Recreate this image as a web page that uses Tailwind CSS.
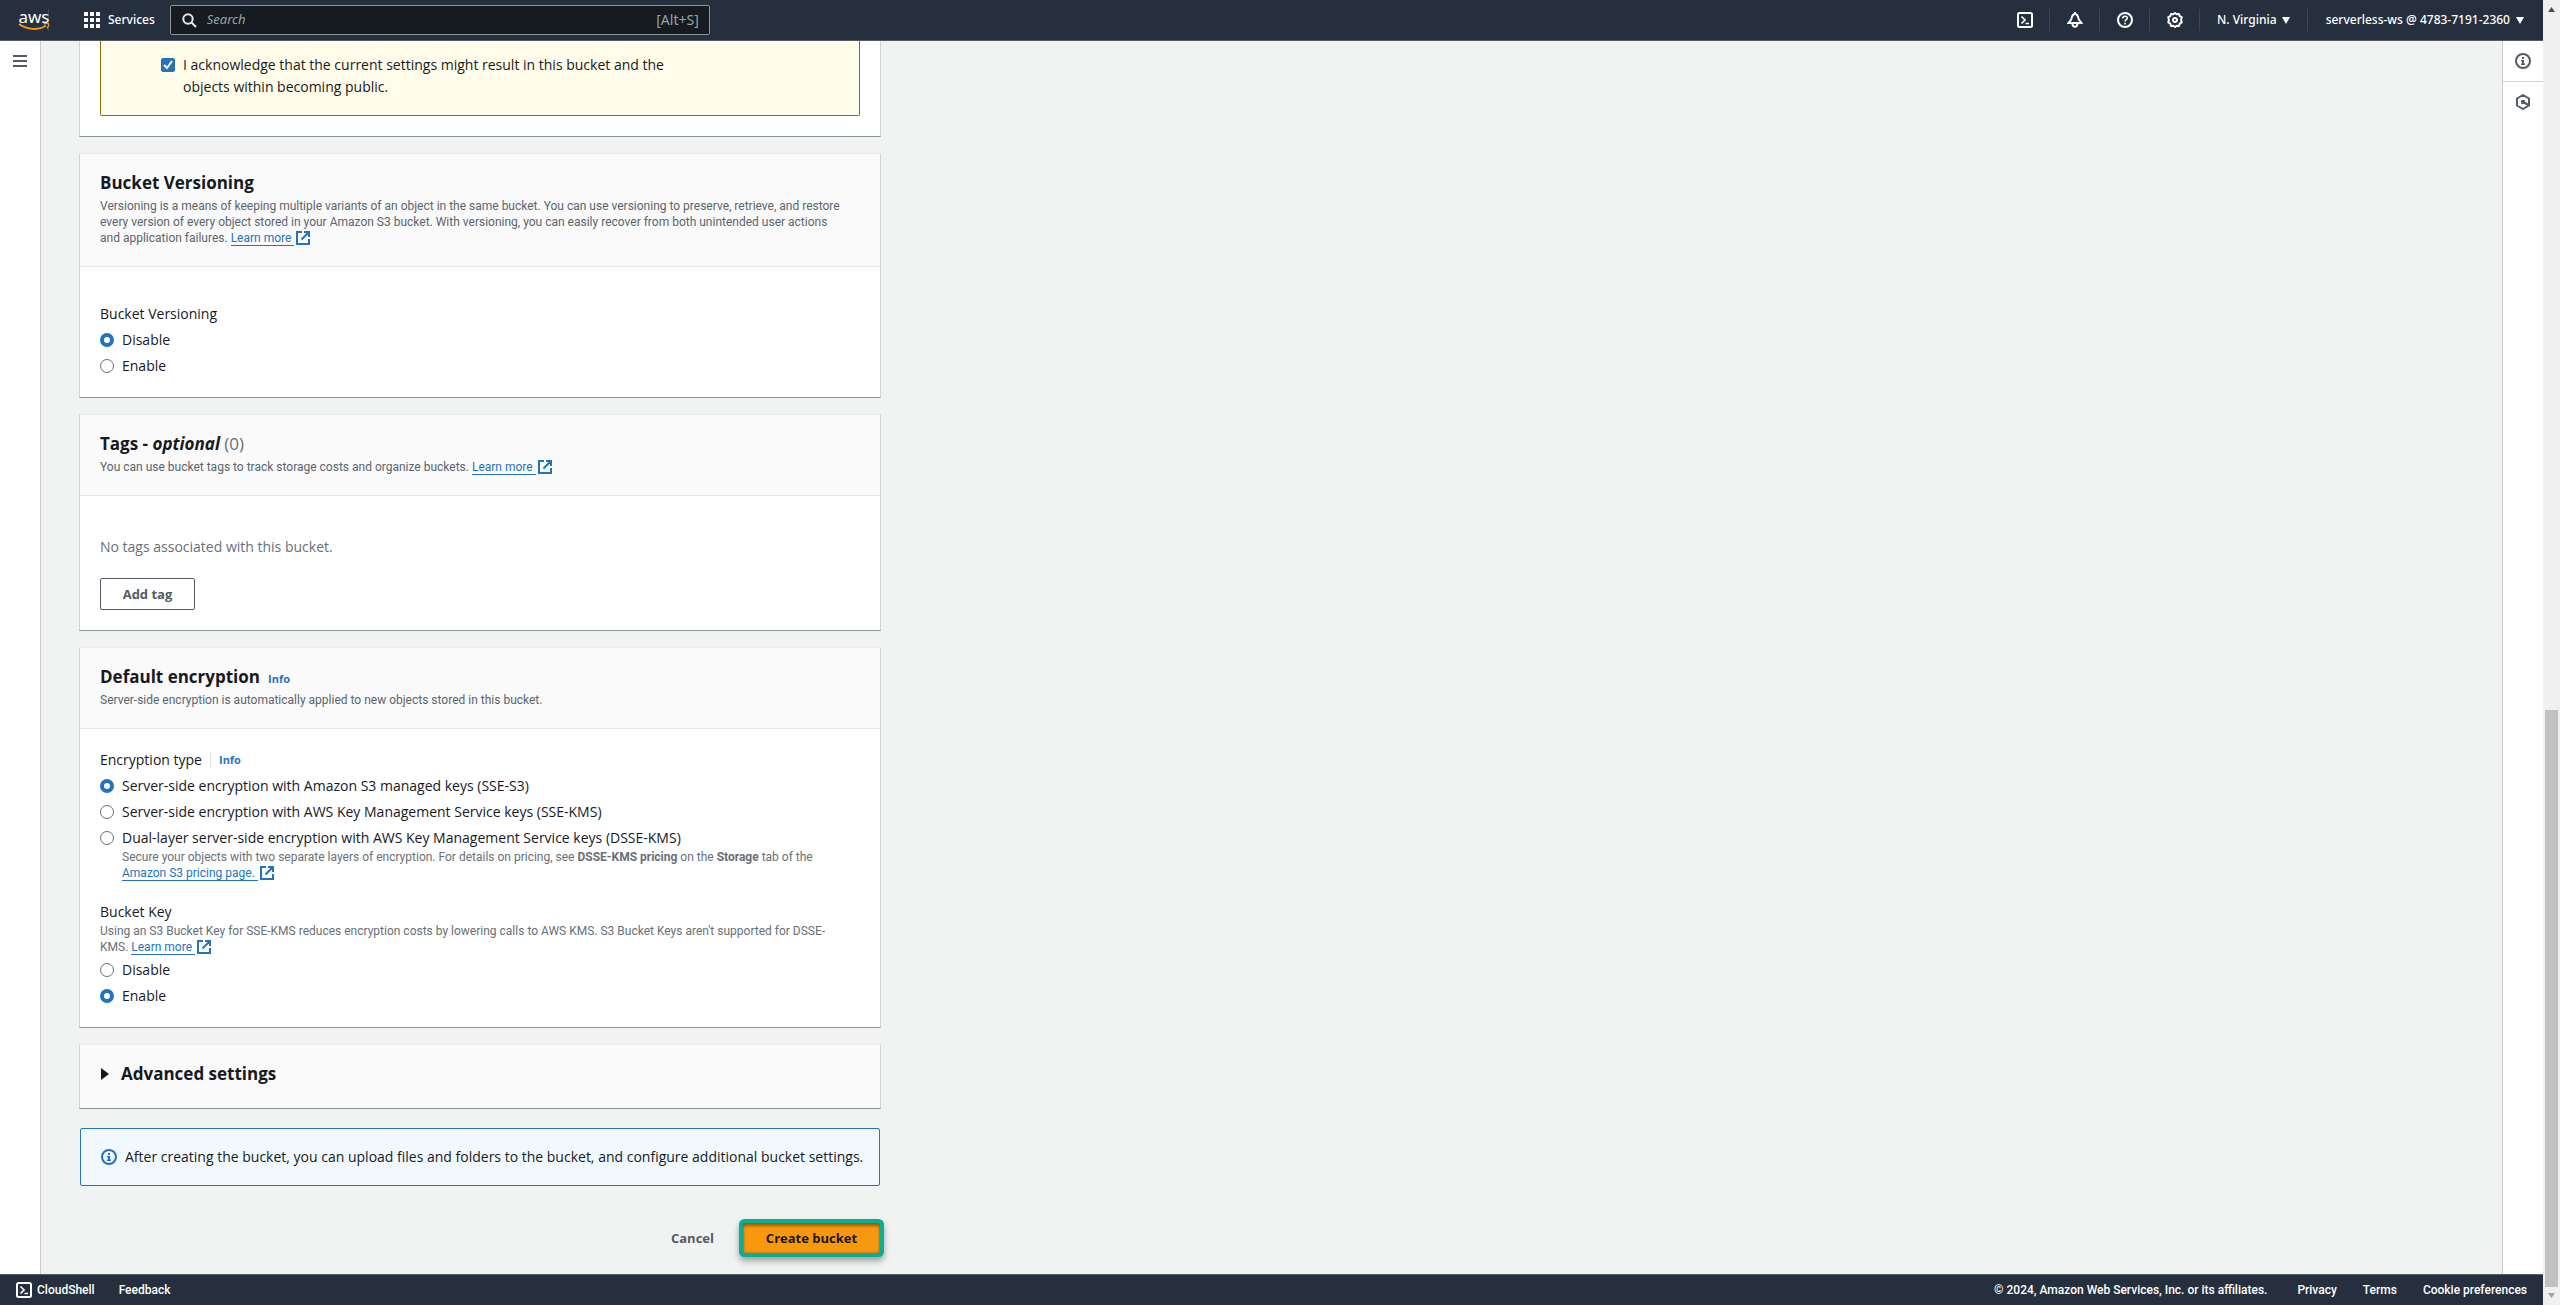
<!DOCTYPE html>
<html lang="en">
<head>
<meta charset="utf-8">
<title>Create bucket</title>
<script src="https://cdn.jsdelivr.net/npm/@tailwindcss/browser@4"></script>
</head>
<body class="flex h-screen bg-[#f1f3f3] font-['Open_Sans',sans-serif] text-sm leading-[22px] text-[#16191f]">

<svg class="hidden">
  <symbol id="external" viewBox="0 0 14 14"><path d="M6 1H1v12h12V8M8 1h5v5M13 1 5.500 8.500" fill="none" stroke="currentColor" stroke-width="2"/></symbol>
  <symbol id="shell" viewBox="0 0 16 16"><rect x="1" y="1" width="14" height="14" rx="1.500" fill="none" stroke="currentColor" stroke-width="2"/><path d="m4.500 4.500 3.500 3.500-3.500 3.500M8.500 11.500h3.500" fill="none" stroke="currentColor" stroke-width="1.700"/></symbol>
  <symbol id="info" viewBox="0 0 16 16"><circle cx="8" cy="8" r="7" fill="none" stroke="currentColor" stroke-width="2"/><path d="M7 4h2v2H7zM6 7h3v3.500h1V12H6v-1.500h1V8.500H6z" fill="currentColor"/></symbol>
  <symbol id="caret" viewBox="0 0 8 7"><path d="M0 0h8L4 7z" fill="currentColor"/></symbol>
</svg>

<div class="flex min-w-0 flex-1 flex-col">

  <header class="flex h-[41px] shrink-0 items-center border-b border-[#545b64] bg-[#252f3e] font-['Noto_Sans',sans-serif] text-xs font-medium text-white">
    <a href="#" aria-label="AWS" class="flex h-[22px] w-[49px] items-center border-r border-[#414750] pl-[18px]">
      <span class="flex flex-col items-center">
        <span class="text-[17px] leading-[12px] font-normal">aws</span>
        <svg class="h-[7px] w-8" viewBox="0 0 32 7"><path d="M1 1c8 6 20 6.500 27 1.500" fill="none" stroke="#f7981f" stroke-width="2"/><path d="M25.500 1c2.500-.8 4.500-.6 5 0s0 3-1.500 4.500" fill="none" stroke="#f7981f" stroke-width="1.300"/></svg>
      </span>
    </a>
    <button class="ml-[35px] flex items-center gap-2">
      <svg class="size-4" viewBox="0 0 16 16" fill="currentColor"><path d="M0 0h4v4H0zM6 0h4v4H6zM12 0h4v4h-4zM0 6h4v4H0zM6 6h4v4H6zM12 6h4v4h-4zM0 12h4v4H0zM6 12h4v4H6zM12 12h4v4h-4z"/></svg>
      Services
    </button>
    <label class="ml-[15px] flex h-[30px] w-[540px] items-center gap-[10px] rounded-[2px] border border-[#8d9899] bg-[#161a21] pr-[10px] pl-[11px]">
      <svg class="size-[15px] text-[#e5e7e8]" viewBox="0 0 15 15" fill="none" stroke="currentColor" stroke-width="2"><circle cx="6" cy="6" r="4.700"/><path d="m9.500 9.500 4.500 4.500"/></svg>
      <input type="text" aria-label="Search" placeholder="Search" class="min-w-0 flex-1 text-[13px] font-normal italic outline-none placeholder:text-[#95a5a6]">
      <span class="text-sm font-normal text-[#95a5a6]">[Alt+S]</span>
    </label>
    <div class="ml-auto flex items-center">
      <button aria-label="CloudShell" class="flex h-[22px] w-[50px] items-center justify-center border-r border-[#414750]"><svg class="size-4"><use href="#shell"/></svg></button>
      <button aria-label="Notifications" class="flex h-[22px] w-[50px] items-center justify-center border-r border-[#414750]"><svg class="size-4" viewBox="0 0 16 16" fill="none" stroke="currentColor" stroke-width="2"><path d="M8 0v2M8 2C5.500 2 5 4 4.500 6.500 4 8.500 2.500 9.500 1.500 11h13C13.500 9.500 12 8.500 11.500 6.500 11 4 10.500 2 8 2z"/><path d="M5.500 11.500a2.500 3.300 0 0 0 5 0"/></svg></button>
      <button aria-label="Help" class="flex h-[22px] w-[50px] items-center justify-center border-r border-[#414750]"><svg class="size-4" viewBox="0 0 16 16" fill="none" stroke="currentColor" stroke-width="2"><circle cx="8" cy="8" r="7"/><path d="M5.700 6.500C5.700 5 6.700 4.300 8 4.300s2.300.8 2.300 2C10.300 7.700 8 7.700 8 9.500M8 10.700v1.800" stroke-width="1.600"/></svg></button>
      <button aria-label="Settings" class="flex h-[22px] w-[50px] items-center justify-center border-r border-[#414750]"><svg class="size-4" viewBox="0 0 16 16" fill="none" stroke="currentColor" stroke-width="2"><path d="m8 1 1.800 1.300 2.200-.3.700 2.100 2 1-.6 2.900.6 2.500-2 1.200-.7 2.300-2.200-.3L8 15l-1.800-1.300-2.200.3-.7-2.300-2-1.200.6-2.500-.6-2.900 2-1L4 2l2.200.3z" stroke-linejoin="round"/><circle cx="8" cy="8" r="2"/></svg></button>
      <button class="flex h-[22px] items-center gap-[5px] border-r border-[#414750] px-[17px]">N. Virginia <svg class="h-[7px] w-2"><use href="#caret"/></svg></button>
      <button class="flex h-[22px] items-center gap-[6px] pr-[19px] pl-[18px]">serverless-ws @ 4783-7191-2360 <svg class="h-[7px] w-2"><use href="#caret"/></svg></button>
    </div>
  </header>

  <div class="flex min-h-0 flex-1">
    <nav class="w-[41px] shrink-0 border-r border-[#c9cdcd] bg-white">
      <button aria-label="Open navigation" class="flex h-10 w-full items-center justify-center"><svg class="h-3 w-[14px] text-[#545b64]" viewBox="0 0 14 12" fill="currentColor"><path d="M0 0h14v2H0zM0 5h14v2H0zM0 10h14v2H0z"/></svg></button>
    </nav>

    <main class="min-w-0 flex-1 overflow-hidden pl-[38px]">
      <form class="w-[802px]">

        <section class="border border-t-0 border-[#d0d4d4] border-b-[#879596] bg-white px-5 pb-5">
          <div class="rounded-b-[2px] border border-t-0 border-[#906806] bg-[#fffce9] pt-[13px] pb-[17px] pl-[60px]">
            <label class="flex w-[510px] gap-2">
              <span class="mt-1 grid size-[14px] shrink-0">
                <input type="checkbox" checked class="col-start-1 row-start-1 size-[14px] appearance-none rounded-[2px] border border-[#687078] checked:border-[#2573bd] checked:bg-[#2573bd]">
                <svg class="pointer-events-none col-start-1 row-start-1 size-[14px]" viewBox="0 0 14 14" fill="none" stroke="#fff" stroke-width="2"><path d="m3 7 3 3 5-7"/></svg>
              </span>
              <span>I acknowledge that the current settings might result in this bucket and the<br>objects within becoming public.</span>
            </label>
          </div>
        </section>

        <section class="mt-4 border border-[#d0d4d4] border-t-[#eaeded] border-b-[#879596] bg-white">
          <div class="border-b border-[#e3e7e7] bg-[#fafafa] px-5 pt-[18px] pb-5">
            <h2 class="mb-1 text-[17px] font-bold">Bucket Versioning</h2>
            <p class="font-[Roboto,sans-serif] text-xs leading-4 text-[#5b646d]">Versioning is a means of keeping multiple variants of an object in the same bucket. You can use versioning to preserve, retrieve, and restore<br>every version of every object stored in your Amazon S3 bucket. With versioning, you can easily recover from both unintended user actions<br>and application failures. <a href="#" class="text-[#2573bd]"><span class="border-b border-[#2573bd] pr-[3px]">Learn more</span><svg class="ml-[2px] inline size-[14px] align-[-3px]"><use href="#external"/></svg></a></p>
          </div>
          <fieldset class="flex flex-col gap-1 px-5 pt-9 pb-5">
            <legend class="contents">Bucket Versioning</legend>
            <label class="flex items-center gap-2"><input type="radio" name="versioning" checked class="size-[14px] appearance-none rounded-full border border-[#687078] bg-white checked:border-4 checked:border-[#2573bd]">Disable</label>
            <label class="flex items-center gap-2"><input type="radio" name="versioning" class="size-[14px] appearance-none rounded-full border border-[#687078] bg-white checked:border-4 checked:border-[#2573bd]">Enable</label>
          </fieldset>
        </section>

        <section class="mt-4 border border-[#d0d4d4] border-t-[#eaeded] border-b-[#879596] bg-white">
          <div class="border-b border-[#e3e7e7] bg-[#fafafa] px-5 pt-[18px] pb-5">
            <h2 class="mb-1 text-[17px] font-bold">Tags - <i>optional</i> <span class="font-normal text-[#687078]">(0)</span></h2>
            <p class="font-[Roboto,sans-serif] text-xs leading-4 text-[#5b646d]">You can use bucket tags to track storage costs and organize buckets. <a href="#" class="text-[#2573bd]"><span class="border-b border-[#2573bd] pr-[3px]">Learn more</span><svg class="ml-[2px] inline size-[14px] align-[-3px]"><use href="#external"/></svg></a></p>
          </div>
          <div class="px-5 pt-10 pb-5">
            <p class="text-[#687078]">No tags associated with this bucket.</p>
            <button type="button" class="mt-5 block h-8 w-[95px] rounded-[2px] border border-[#545b64] bg-white text-[13px] font-bold text-[#545b64]">Add tag</button>
          </div>
        </section>

        <section class="mt-4 border border-[#d0d4d4] border-t-[#eaeded] border-b-[#879596] bg-white">
          <div class="border-b border-[#e3e7e7] bg-[#fafafa] px-5 pt-[18px] pb-5">
            <div class="mb-1 flex h-[22px] items-baseline gap-2">
              <h2 class="text-[17px] leading-[22px] font-bold">Default encryption</h2>
              <a href="#" class="text-[11px] leading-4 font-bold text-[#2573bd]">Info</a>
            </div>
            <p class="font-[Roboto,sans-serif] text-xs leading-4 text-[#5b646d]">Server-side encryption is automatically applied to new objects stored in this bucket.</p>
          </div>
          <div class="px-5 pt-5 pb-5">
            <fieldset class="flex flex-col gap-1">
              <legend class="contents"><span class="flex items-center">Encryption type<a href="#" class="ml-2 flex h-[18px] items-center border-l border-[#e3e7e7] pl-2 text-[11px] font-bold text-[#2573bd]">Info</a></span></legend>
              <label class="flex items-center gap-2"><input type="radio" name="encryption" checked class="size-[14px] appearance-none rounded-full border border-[#687078] bg-white checked:border-4 checked:border-[#2573bd]">Server-side encryption with Amazon S3 managed keys (SSE-S3)</label>
              <label class="flex items-center gap-2"><input type="radio" name="encryption" class="size-[14px] appearance-none rounded-full border border-[#687078] bg-white checked:border-4 checked:border-[#2573bd]">Server-side encryption with AWS Key Management Service keys (SSE-KMS)</label>
              <div>
                <label class="flex items-center gap-2"><input type="radio" name="encryption" class="size-[14px] appearance-none rounded-full border border-[#687078] bg-white checked:border-4 checked:border-[#2573bd]">Dual-layer server-side encryption with AWS Key Management Service keys (DSSE-KMS)</label>
                <p class="pl-[22px] font-[Roboto,sans-serif] text-xs leading-4 text-[#687078]">Secure your objects with two separate layers of encryption. For details on pricing, see <b>DSSE-KMS pricing</b> on the <b>Storage</b> tab of the<br><a href="#" class="text-[#2573bd]"><span class="border-b border-[#2573bd] pr-[3px]">Amazon S3 pricing page.</span><svg class="ml-[2px] inline size-[14px] align-[-3px]"><use href="#external"/></svg></a></p>
              </div>
            </fieldset>
            <fieldset class="mt-5 flex flex-col">
              <legend class="contents">Bucket Key</legend>
              <p class="font-[Roboto,sans-serif] text-xs leading-4 text-[#687078]">Using an S3 Bucket Key for SSE-KMS reduces encryption costs by lowering calls to AWS KMS. S3 Bucket Keys aren't supported for DSSE-<br>KMS. <a href="#" class="text-[#2573bd]"><span class="border-b border-[#2573bd] pr-[3px]">Learn more</span><svg class="ml-[2px] inline size-[14px] align-[-3px]"><use href="#external"/></svg></a></p>
              <label class="mt-1 flex items-center gap-2"><input type="radio" name="key" class="size-[14px] appearance-none rounded-full border border-[#687078] bg-white checked:border-4 checked:border-[#2573bd]">Disable</label>
              <label class="mt-1 flex items-center gap-2"><input type="radio" name="key" checked class="size-[14px] appearance-none rounded-full border border-[#687078] bg-white checked:border-4 checked:border-[#2573bd]">Enable</label>
            </fieldset>
          </div>
        </section>

        <section class="mt-4 border border-[#d0d4d4] border-t-[#eaeded] border-b-[#879596] bg-[#fafafa] px-5 pt-[18px] pb-[23px]">
          <h2><button type="button" aria-expanded="false" class="flex items-center gap-3 text-[17px] leading-[22px] font-bold"><svg class="h-3 w-[9px]" viewBox="0 0 9 12"><path d="M1 0v12l8-6z" fill="currentColor"/></svg>Advanced settings</button></h2>
        </section>

        <div class="mx-px mt-[19px] flex items-center gap-2 rounded-[2px] border border-[#2573bd] bg-[#f1f9ff] py-[17px] pl-5 whitespace-nowrap">
          <svg class="size-4 text-[#2573bd]"><use href="#info"/></svg>
          After creating the bucket, you can upload files and folders to the bucket, and configure additional bucket settings.
        </div>

        <div class="mt-[37px] flex items-center justify-end gap-[29px] pr-px text-[13px] font-bold">
          <button type="button" class="text-[#545b64]">Cancel</button>
          <button type="submit" class="h-[30px] w-[137px] rounded-[2px] bg-[#f8980f] shadow-[inset_0_3px_3px_rgba(110,60,0,0.6),inset_0_0_3px_rgba(110,60,0,0.5),0_0_0_4px_#0aae92,0_4px_6px_4px_rgba(0,0,0,0.35)]">Create bucket</button>
        </div>
      </form>
    </main>

    <aside class="flex w-[41px] shrink-0 flex-col border-l border-[#c9cdcd] bg-white text-[#545b64]">
      <button aria-label="Info" class="flex h-[41px] items-center justify-center border-b border-[#d0d4d4]"><svg class="size-4"><use href="#info"/></svg></button>
      <button aria-label="Diagnostics" class="flex h-10 items-center justify-center"><svg class="size-4" viewBox="0 0 16 16" fill="none" stroke="currentColor" stroke-width="2"><path d="m8 1 6 3.500v7L8 15l-6-3.500v-7z" stroke-linejoin="round"/><path d="m8 8 5.500 3"/><circle cx="8" cy="8" r="1.200" fill="currentColor"/></svg></button>
    </aside>
  </div>

  <footer class="flex h-[31px] shrink-0 items-center border-t border-[#545b64] bg-[#252f3e] pr-4 pl-4 font-[Roboto,sans-serif] text-xs font-medium text-white">
    <a href="#" class="flex items-center gap-[5px]"><svg class="size-4"><use href="#shell"/></svg>CloudShell</a>
    <a href="#" class="ml-6">Feedback</a>
    <span class="ml-auto">© 2024, Amazon Web Services, Inc. or its affiliates.</span>
    <a href="#" class="ml-[30px]">Privacy</a>
    <a href="#" class="ml-[26px]">Terms</a>
    <a href="#" class="ml-[26px]">Cookie preferences</a>
  </footer>
</div>

<!-- page scrollbar -->
<div class="flex w-[17px] shrink-0 flex-col items-center bg-[#f0f0f0]" aria-hidden="true">
  <svg class="mt-[7px] h-[5px] w-[7px] shrink-0 text-[#505050]" viewBox="0 0 7 5"><path d="M0 5h7L3.500 0z" fill="currentColor"/></svg>
  <div class="grow-[699]"></div>
  <div class="w-[13px] grow-[577] bg-[#c1c1c1]"></div>
  <svg class="mt-[6px] mb-[7px] h-[5px] w-[7px] shrink-0 text-[#a3a3a3]" viewBox="0 0 7 5"><path d="M0 0h7L3.500 5z" fill="currentColor"/></svg>
</div>
</body>
</html>
